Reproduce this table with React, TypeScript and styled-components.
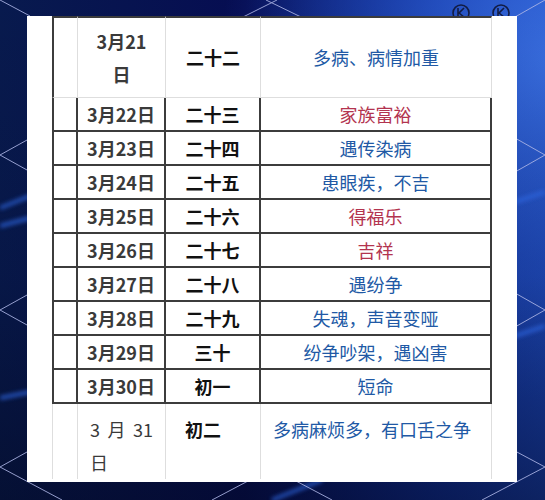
import React, { FC } from 'react';
import styled, { createGlobalStyle } from 'styled-components';

const GlobalStyle = createGlobalStyle`
    html, body {
        margin: 0;
        padding: 0;
        background: #07123c;
    }
`;

const Page = styled.div`
    position: relative;
    width: 545px;
    height: 500px;
    overflow: hidden;
    padding-top: 16px;
    box-sizing: border-box;
    font-family: 'Noto Sans CJK SC', 'Noto Sans', sans-serif;
`;

const Backdrop = styled.svg`
    position: absolute;
    top: 0;
    left: 0;
    z-index: 0;
`;

const Panel = styled.div`
    position: relative;
    z-index: 1;
    width: 490px;
    height: 466px;
    margin-left: 27px;
    padding: 0 25px;
    box-sizing: border-box;
    background: #fff;
    overflow: hidden;
`;

const Grid = styled.div`
    display: grid;
    grid-template-columns: 26px 88px 95px 231px;
    grid-template-rows: 82px repeat(9, 34px) auto;
`;

type Zone = 'head' | 'body' | 'tail';

const DARK = '2px solid #3c3c3c';
const LIGHT = '1px solid #dedede';

const Cell = styled.div<{ $zone: Zone; $first?: boolean; $pad?: number }>`
    box-sizing: border-box;
    display: flex;
    align-items: ${(p) => (p.$zone === 'tail' ? 'flex-start' : 'center')};
    justify-content: ${(p) => (p.$zone === 'tail' ? 'flex-start' : 'center')};
    text-align: ${(p) => (p.$zone === 'tail' ? 'left' : 'center')};
    padding: ${(p) => (p.$zone === 'tail' ? `9px 0 0 ${p.$pad ?? 0}px` : '0')};
    font-size: 18px;
    line-height: ${(p) => (p.$zone === 'body' ? '32px' : '33px')};
    border-top: ${(p) => (p.$zone === 'head' ? DARK : 'none')};
    border-right: ${(p) => (p.$zone === 'body' ? DARK : LIGHT)};
    border-bottom: ${(p) => (p.$zone === 'body' ? DARK : p.$zone === 'head' ? LIGHT : 'none')};
    border-left: ${(p) => (!p.$first ? 'none' : p.$zone === 'tail' ? LIGHT : DARK)};
`;

const DateText = styled.span<{ $bold?: boolean }>`
    color: #3a3a3a;
    font-weight: ${(p) => (p.$bold === false ? 400 : 700)};
`;

const LunarText = styled.span`
    color: #111;
    font-weight: 700;
`;

const Omen = styled.span<{ $tone: 'blue' | 'red' }>`
    color: ${(p) => (p.$tone === 'red' ? '#b3344f' : '#2159a5')};
`;

const SpreadLine = styled.span`
    display: flex;
    justify-content: space-between;
    width: 63px;
`;

type Row = { date: string; lunar: string; omen: string; tone: 'blue' | 'red' };

const rows: Row[] = [
    { date: '3月22日', lunar: '二十三', omen: '家族富裕', tone: 'red' },
    { date: '3月23日', lunar: '二十四', omen: '遇传染病', tone: 'blue' },
    { date: '3月24日', lunar: '二十五', omen: '患眼疾，不吉', tone: 'blue' },
    { date: '3月25日', lunar: '二十六', omen: '得福乐', tone: 'red' },
    { date: '3月26日', lunar: '二十七', omen: '吉祥', tone: 'red' },
    { date: '3月27日', lunar: '二十八', omen: '遇纷争', tone: 'blue' },
    { date: '3月28日', lunar: '二十九', omen: '失魂，声音变哑', tone: 'blue' },
    { date: '3月29日', lunar: '三十', omen: '纷争吵架，遇凶害', tone: 'blue' },
    { date: '3月30日', lunar: '初一', omen: '短命', tone: 'blue' },
];

const LINE = '#aeb6e6';

const Background: FC = () => (
    <Backdrop width="545" height="500" viewBox="0 0 545 500">
        <defs>
            <linearGradient id="base" x1="0" y1="0" x2="1" y2="0">
                <stop offset="0" stopColor="#081a4e" />
                <stop offset="0.45" stopColor="#060d52" />
                <stop offset="0.8" stopColor="#10309a" />
                <stop offset="1" stopColor="#1a44b4" />
            </linearGradient>
            <linearGradient id="shade" x1="0" y1="0" x2="0" y2="1">
                <stop offset="0" stopColor="#03081f" stopOpacity="0" />
                <stop offset="0.55" stopColor="#03081f" stopOpacity="0.15" />
                <stop offset="1" stopColor="#03081f" stopOpacity="0.55" />
            </linearGradient>
            <radialGradient id="glow" cx="560" cy="60" r="340" gradientUnits="userSpaceOnUse">
                <stop offset="0" stopColor="#3c72e4" stopOpacity="0.95" />
                <stop offset="0.6" stopColor="#2a5ad0" stopOpacity="0.4" />
                <stop offset="1" stopColor="#2a5ad0" stopOpacity="0" />
            </radialGradient>
            <filter id="soft" x="-20%" y="-200%" width="140%" height="500%">
                <feGaussianBlur stdDeviation="2" />
            </filter>
        </defs>
        <rect width="545" height="500" fill="url(#base)" />
        <rect width="545" height="500" fill="url(#glow)" />
        <rect width="545" height="500" fill="url(#shade)" />
        <g stroke="#2f66e0" strokeWidth="4" filter="url(#soft)" opacity="0.75">
            <line x1="0" y1="208" x2="30" y2="196" />
            <line x1="0" y1="226" x2="30" y2="218" />
            <line x1="0" y1="398" x2="30" y2="392" />
            <line x1="515" y1="202" x2="545" y2="192" />
            <line x1="515" y1="336" x2="545" y2="326" />
            <line x1="272" y1="500" x2="322" y2="480" />
        </g>
        <g stroke={LINE} strokeWidth="1" fill="none" opacity="0.85">
            <path d="M0 0 L30 16" />
            <path d="M27 140 L0 155 L27 170" />
            <path d="M27 295 L0 310 L27 325" />
            <path d="M27 452 L0 467 L62 500" />
            <path d="M243 17 L277 0" />
            <path d="M266 0 L301 17" />
            <path d="M515 17 L545 0" />
            <path d="M515 138 L545 155 L515 172" />
            <path d="M515 293 L545 310 L515 327" />
            <path d="M515 451 L545 467 L482 500" />
            <path d="M212 500 L248 481" />
            <path d="M296 481 L332 500" />
        </g>
        <g stroke="#121c44" strokeWidth="1.6" fill="none">
            <circle cx="461" cy="13" r="8" />
            <circle cx="501" cy="13" r="8" />
            <path d="M458 8 L458 17 M464 8 L459 13 L464 17" />
            <path d="M498 8 L498 17 M504 8 L499 13 L504 17" />
        </g>
    </Backdrop>
);

const App: FC = () => (
    <>
        <GlobalStyle />
        <Page>
            <Background />
            <Panel>
                <Grid>
                    <Cell $zone="head" $first />
                    <Cell $zone="head">
                        <DateText>
                            3月21
                            <br />日
                        </DateText>
                    </Cell>
                    <Cell $zone="head">
                        <LunarText>二十二</LunarText>
                    </Cell>
                    <Cell $zone="head">
                        <Omen $tone="blue">多病、病情加重</Omen>
                    </Cell>

                    {rows.map((row) => (
                        <React.Fragment key={row.date}>
                            <Cell $zone="body" $first />
                            <Cell $zone="body">
                                <DateText>{row.date}</DateText>
                            </Cell>
                            <Cell $zone="body">
                                <LunarText>{row.lunar}</LunarText>
                            </Cell>
                            <Cell $zone="body">
                                <Omen $tone={row.tone}>{row.omen}</Omen>
                            </Cell>
                        </React.Fragment>
                    ))}

                    <Cell $zone="tail" $first />
                    <Cell $zone="tail" $pad={12}>
                        <DateText $bold={false}>
                            <SpreadLine>
                                <span>3</span>
                                <span>月</span>
                                <span>31</span>
                            </SpreadLine>
                            日
                        </DateText>
                    </Cell>
                    <Cell $zone="tail" $pad={19}>
                        <LunarText>初二</LunarText>
                    </Cell>
                    <Cell $zone="tail" $pad={12}>
                        <Omen $tone="blue">多病麻烦多，有口舌之争</Omen>
                    </Cell>
                </Grid>
            </Panel>
        </Page>
    </>
);

export default App;
